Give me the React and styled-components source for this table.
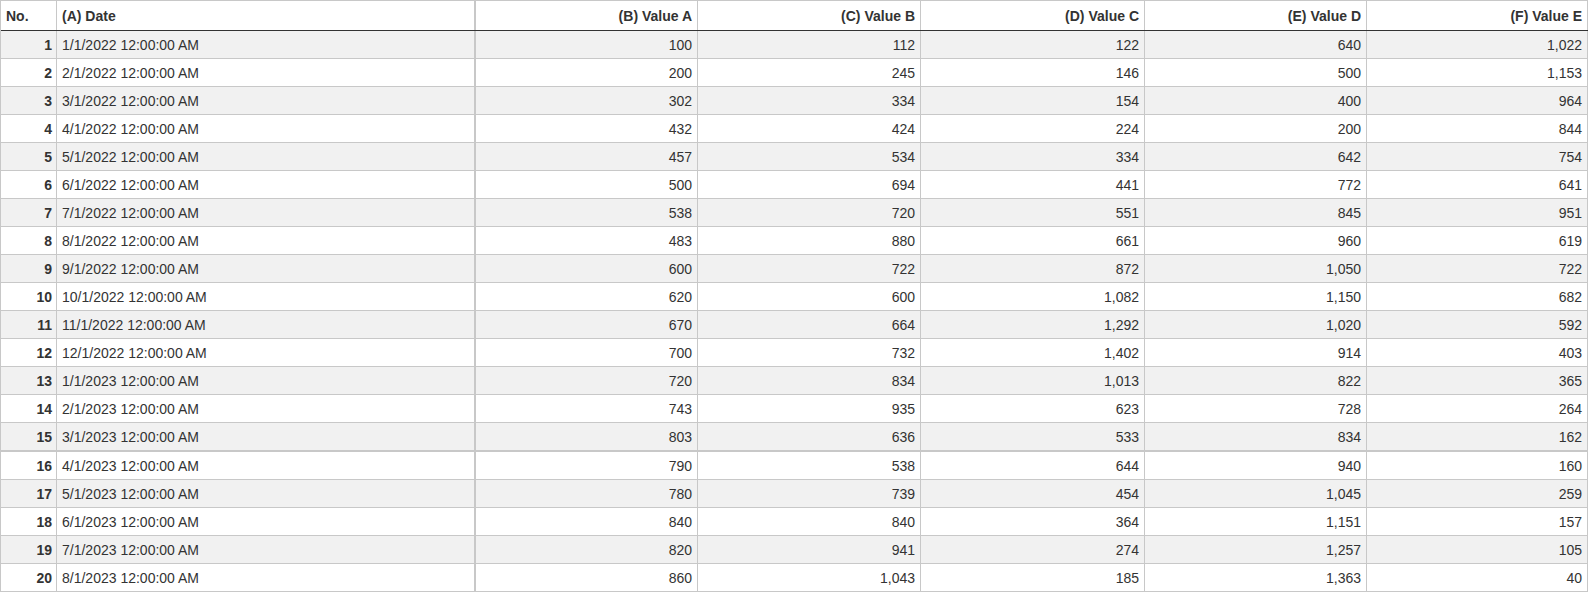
import React from "react";
import styled, { createGlobalStyle } from "styled-components";

const Global = createGlobalStyle`
  html, body { margin: 0; padding: 0; background: #fff; }
  body { font-family: "Liberation Sans", Arial, sans-serif; }
`;

const COLS = "56px 419px 222px 223px 224px 222px 221px";

const Grid = styled.div`
  width: 1588px;
  box-sizing: border-box;
  border-left: 1px solid #c8c8c8;
  border-top: 1px solid #c8c8c8;
  font-family: "Liberation Sans", Arial, sans-serif;
  font-size: 14px;
  color: #333;
`;

const Row = styled.div`
  display: grid;
  grid-template-columns: ${COLS};
  height: ${(p) => p.$h}px;
  box-sizing: border-box;
  background: ${(p) => (p.$alt ? "#f1f1f1" : "#fff")};
  border-bottom: ${(p) => p.$bw || 1}px solid ${(p) => p.$bc || "#c8c8c8"};
`;

const Cell = styled.div`
  box-sizing: border-box;
  display: flex;
  align-items: center;
  justify-content: ${(p) => (p.$right ? "flex-end" : "flex-start")};
  padding: 0 ${(p) => (p.$num ? 4 : 5)}px 0 ${(p) => (p.$num ? 4 : 5)}px;
  border-right: ${(p) => (p.$thick ? 2 : 1)}px solid #c8c8c8;
  font-weight: ${(p) => (p.$bold ? 700 : 400)};
  white-space: nowrap;
  overflow: hidden;
`;

const headers = ["(B) Value A", "(C) Value B", "(D) Value C", "(E) Value D", "(F) Value E"];

const data = [
  ["1/1/2022 12:00:00 AM", 100, 112, 122, 640, 1022],
  ["2/1/2022 12:00:00 AM", 200, 245, 146, 500, 1153],
  ["3/1/2022 12:00:00 AM", 302, 334, 154, 400, 964],
  ["4/1/2022 12:00:00 AM", 432, 424, 224, 200, 844],
  ["5/1/2022 12:00:00 AM", 457, 534, 334, 642, 754],
  ["6/1/2022 12:00:00 AM", 500, 694, 441, 772, 641],
  ["7/1/2022 12:00:00 AM", 538, 720, 551, 845, 951],
  ["8/1/2022 12:00:00 AM", 483, 880, 661, 960, 619],
  ["9/1/2022 12:00:00 AM", 600, 722, 872, 1050, 722],
  ["10/1/2022 12:00:00 AM", 620, 600, 1082, 1150, 682],
  ["11/1/2022 12:00:00 AM", 670, 664, 1292, 1020, 592],
  ["12/1/2022 12:00:00 AM", 700, 732, 1402, 914, 403],
  ["1/1/2023 12:00:00 AM", 720, 834, 1013, 822, 365],
  ["2/1/2023 12:00:00 AM", 743, 935, 623, 728, 264],
  ["3/1/2023 12:00:00 AM", 803, 636, 533, 834, 162],
  ["4/1/2023 12:00:00 AM", 790, 538, 644, 940, 160],
  ["5/1/2023 12:00:00 AM", 780, 739, 454, 1045, 259],
  ["6/1/2023 12:00:00 AM", 840, 840, 364, 1151, 157],
  ["7/1/2023 12:00:00 AM", 820, 941, 274, 1257, 105],
  ["8/1/2023 12:00:00 AM", 860, 1043, 185, 1363, 40],
];

const fmt = (n) => n.toLocaleString("en-US");

export default function App() {
  return (
    <>
      <Global />
      <Grid>
        <Row $h={30} $bc="#333">
          <Cell $bold>No.</Cell>
          <Cell $bold $thick>(A) Date</Cell>
          {headers.map((h) => (
            <Cell key={h} $bold $right>{h}</Cell>
          ))}
        </Row>
        {data.map((r, i) => (
          <Row key={i} $h={i === 14 ? 29 : 28} $bw={i === 14 ? 2 : 1} $alt={i % 2 === 0}>
            <Cell $bold $right $num>{i + 1}</Cell>
            <Cell $thick>{r[0]}</Cell>
            {r.slice(1).map((v, j) => (
              <Cell key={j} $right>{fmt(v)}</Cell>
            ))}
          </Row>
        ))}
      </Grid>
    </>
  );
}
